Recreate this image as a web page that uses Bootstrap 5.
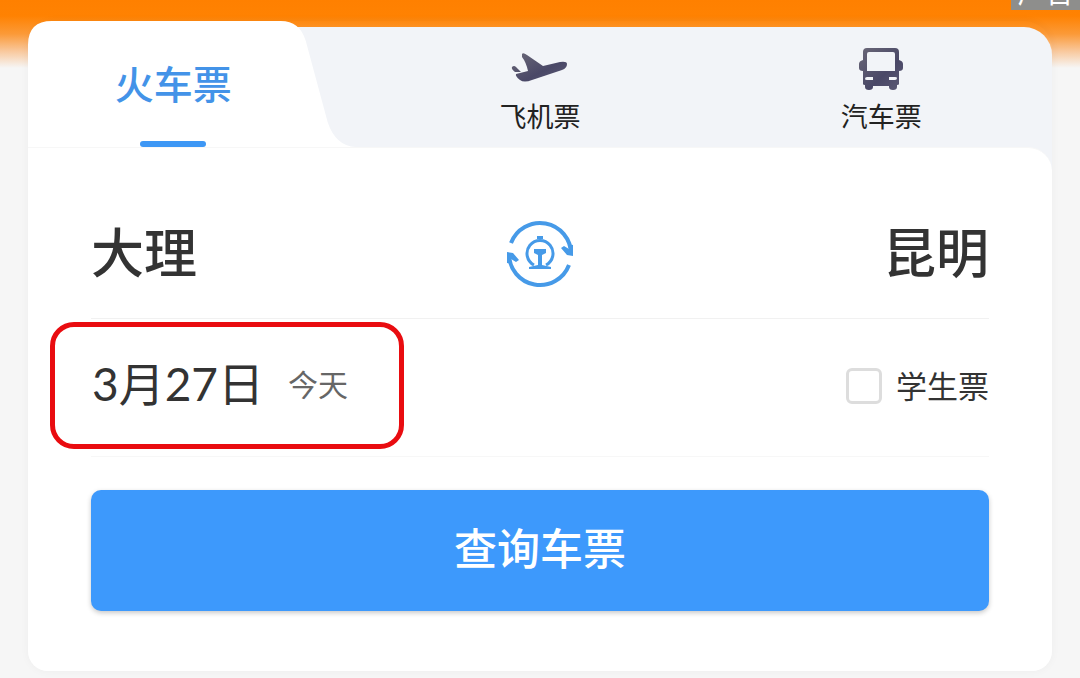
<!DOCTYPE html>
<html lang="zh-CN">
<head>
<meta charset="utf-8">
<meta name="viewport" content="width=device-width, initial-scale=1">
<title>车票查询</title>
<link href="https://cdn.jsdelivr.net/npm/bootstrap@5.3.0/dist/css/bootstrap.min.css" rel="stylesheet">
<style>
  body {
    font-family: Lato, "Noto Sans CJK SC", sans-serif;
    color: #333;
    background: #f6f6f6 linear-gradient(#ff8000 0, #ff8202 16px, #fb9a38 34px, #f9c596 50px, #f6f6f6 68px) no-repeat;
  }
  .page { padding: 21px 28px 7px; }
  .ad-label {
    top: 0; right: 0; height: 10px; width: 69px;
    background: #8e8e8c; color: #fff; font-size: 28px; line-height: 28px;
  }
  .ad-label div { padding-bottom: 4px; }
  .ticket-box { border-radius: 28px 28px 20px 20px; box-shadow: 0 0 10px rgba(0,0,0,.04); }
  .tabs { padding-top: 6px; }
  .tab-strip { inset: 6px 0 -24px 0; background: #f2f4f8; border-radius: 24px 28px 0 0; }
  .tab-item { height: 120px; padding-top: 4px; gap: 7px; font-size: 27px; line-height: 36px; color: #222; text-decoration: none; }
  .tab-item svg { height: 48px; }
  .tab-active { color: #4393e8; font-size: 39px; font-weight: 500; line-height: 48px; padding: 33px 51px 0 0; gap: 33px; }
  .tab-shape { left: 0; bottom: 0; width: 96%; height: 126px; }
  .tab-active .bar { width: 66px; height: 6px; border-radius: 3px; background: #3d97f5; }
  .panel { padding: 0 63px 60px; border-radius: 0 24px 20px 20px; border-top: 1px solid #f7f7f7; }
  .route { height: 171px; padding-top: 42px; border-bottom: 1px solid #f1f1f1; }
  .city { font-size: 53px; font-weight: 500; line-height: 64px; color: #333; }
  .city, .search { padding: 0 0 3px; }
  .swap svg { width: 72px; height: 72px; }
  .date-row { height: 138px; padding-bottom: 4px; border-bottom: 1px solid #f7f7f7; margin-bottom: 33px; }
  .date-pick {
    height: 127px; margin-left: -41px; padding: 0 51px 4px 37px;
    border: 5px solid #e90c10; border-radius: 24px; gap: 24px; color: #333;
  }
  .day { font-size: 46px; line-height: 60px; }
  .today { font-size: 30px; line-height: 40px; color: #666; }
  .student { font-size: 31px; line-height: 40px; gap: 14px; }
  .student .form-check-input { width: 36px; height: 36px; border: 3px solid #ddd; border-radius: 6px; }
  .search {
    height: 121px; font-size: 43px; font-weight: 500; line-height: 60px; color: #fff;
    background: #3d99fc; border-radius: 10px; box-shadow: 0 2px 5px rgba(0,0,0,.22);
  }
  .search:hover { background: #318cef; color: #fff; }
</style>
</head>
<body>
<div class="ad-label position-absolute overflow-hidden"><div class="d-flex flex-column justify-content-end align-items-center h-100">广告</div></div>
<main class="page">
  <div class="ticket-box">
    <nav class="tabs position-relative">
      <div class="tab-strip position-absolute"></div>
      <div class="row g-0 position-relative">
        <div class="col-4 position-relative">
          <svg class="tab-shape position-absolute" viewBox="0 0 328 127" preserveAspectRatio="none" aria-hidden="true">
            <path d="M0 127V24Q0 0 24 0H253Q272 0 278 20L300 102Q308 126 328 127Z" fill="#fff"/>
          </svg>
          <a href="#train" class="tab-item tab-active position-relative d-flex flex-column align-items-center" aria-current="page">
            <span class="tab-name">火车票</span>
            <span class="bar"></span>
          </a>
        </div>
        <div class="col-4">
          <a href="#plane" class="tab-item d-flex flex-column align-items-center justify-content-center">
            <svg width="60" viewBox="0 0 60 48" aria-hidden="true">
              <defs><linearGradient id="ink" x1="0" y1="0" x2="1" y2="1"><stop offset="0" stop-color="#6b6878"/><stop offset=".6" stop-color="#4a4867"/><stop offset="1" stop-color="#5c5a75"/></linearGradient></defs>
              <path d="M2 23Q4 21 6 23L11 28L5 28Q1 25 2 23ZM12 10Q13 8 17 11L33 22L50 18Q57 17 57 20Q57 24 52 26L22 36Q14 39 10 36Q5 32 6 30L18 27Q16 18 12 13Z" fill="url(#ink)"/>
            </svg>
            <span>飞机票</span>
          </a>
        </div>
        <div class="col-4">
          <a href="#bus" class="tab-item d-flex flex-column align-items-center justify-content-center">
            <svg width="48" viewBox="0 0 48 48" aria-hidden="true">
              <path d="M10 4H38Q42 4 42 8V16Q46 17 46 20V24Q46 27 42 27V40Q42 41 40 41V43Q40 46 36 46Q32 46 32 43V42H16V43Q16 46 12 46Q8 46 8 43V41Q6 41 6 40V27Q2 27 2 24V20Q2 17 6 16V8Q6 4 10 4ZM12 8Q10 8 10 10V27H38V10Q38 8 36 8ZM10 33Q8 33 8 35Q8 36 10 36H16V33ZM32 33V36H38Q40 36 40 34Q40 33 38 33Z" fill="url(#ink)" fill-rule="evenodd"/>
            </svg>
            <span>汽车票</span>
          </a>
        </div>
      </div>
    </nav>
    <section class="panel bg-white position-relative">
      <div class="route d-flex justify-content-between align-items-center">
        <button type="button" class="city btn border-0">大理</button>
        <button type="button" class="swap btn p-0 border-0" aria-label="交换出发地和目的地">
          <svg viewBox="0 0 72 72" fill="none" stroke="#469ae8" stroke-width="4" aria-hidden="true">
            <path d="M7 25A31 31 0 0 1 67 36M65 47A31 31 0 0 1 5 36"/>
            <path d="M57 30L60 28L65 31L64 26L69 27V38L63 37ZM15 42L12 44L7 41L8 46L3 45V34L9 35Z" fill="#469ae8" stroke="none"/>
            <path d="M30 47A13 13 0 1 1 42 47" stroke-width="3"/>
            <path d="M33 18H39V21H33ZM30 31H42V35L38 37V47L47 49V51H25V49L34 47V37L30 35Z" fill="#469ae8" stroke="none"/>
          </svg>
        </button>
        <button type="button" class="city btn border-0">昆明</button>
      </div>
      <div class="date-row d-flex justify-content-between align-items-center">
        <button type="button" class="date-pick bg-transparent d-flex align-items-center">
          <span class="day">3月27日</span><span class="today">今天</span>
        </button>
        <div class="student d-flex align-items-center">
          <input class="form-check-input m-0" type="checkbox" id="student">
          <label for="student">学生票</label>
        </div>
      </div>
      <button type="submit" class="search btn w-100 border-0">查询车票</button>
    </section>
  </div>
</main>
<script src="https://cdn.jsdelivr.net/npm/bootstrap@5.3.0/dist/js/bootstrap.bundle.min.js"></script>
</body>
</html>
